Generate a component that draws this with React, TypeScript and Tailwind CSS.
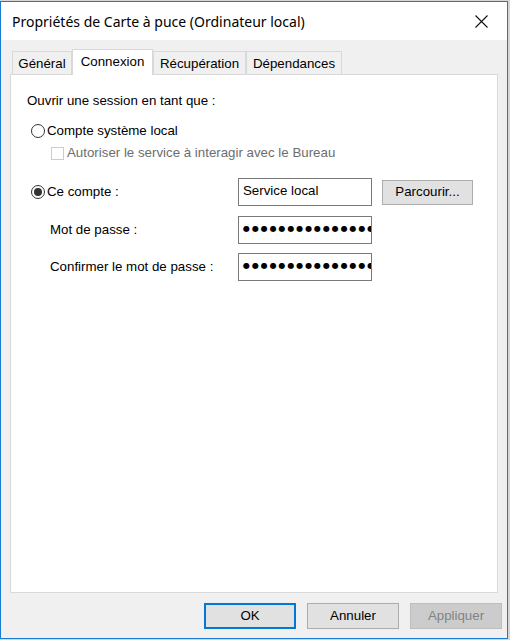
import React from 'react';

const dlg = { fontFamily: '"Liberation Sans", Arial, sans-serif' };

const Radio = ({ checked }: { checked?: boolean }) => (
  <span className="flex h-[14px] w-[14px] shrink-0 items-center justify-center rounded-full border border-[#333333] bg-white">
    {checked && <span className="h-[8px] w-[8px] rounded-full bg-[#333333]" />}
  </span>
);

const Field = ({ children }: { children: React.ReactNode }) => (
  <div className="flex h-[28px] w-[134px] shrink-0 overflow-hidden border border-[#7a7a7a] bg-white pl-[4px] pt-[4px]">
    {children}
  </div>
);

const Dots = () => (
  <span
    className="whitespace-nowrap text-[8px] leading-[15px] tracking-[1.9px] text-black"
    style={{ fontFamily: '"DejaVu Sans", sans-serif' }}
  >
    ●●●●●●●●●●●●●●●
  </span>
);

const Tab = ({ label, w, active }: { label: string; w: string; active?: boolean }) => (
  <div
    className={
      active
        ? `${w} -mb-px z-10 flex h-[26px] items-start justify-center border border-b-0 border-[#d9d9d9] bg-white pt-[4px]`
        : `${w} flex h-[23px] items-start justify-center border border-b-0 border-[#d9d9d9] bg-[#f0f0f0] pt-[4px]`
    }
  >
    {label}
  </div>
);

export default function App() {
  return (
    <div className="h-[640px] w-[510px] bg-[#d6d6d6] pt-[1px]" style={dlg}>
      <div className="flex h-[638px] w-[508px] flex-col border border-[#1a7bd4] bg-[#f0f0f0] text-[13.3px] text-black">
        {/* title bar */}
        <div className="flex h-[38px] shrink-0 items-center justify-between bg-white pl-[11px] pr-[19px]">
          <span
            className="mt-[2px] text-[14px] leading-none text-black"
            style={{ fontFamily: '"Noto Sans", "Open Sans", sans-serif' }}
          >
            Propriétés de Carte à puce (Ordinateur local)
          </span>
          <svg width="13" height="13" viewBox="0 0 13 13" className="mt-[1px]">
            <path d="M0.5 0.5 L12.5 12.5 M12.5 0.5 L0.5 12.5" stroke="#111" strokeWidth="1.1" fill="none" />
          </svg>
        </div>

        {/* tabs */}
        <div className="mt-[9px] flex items-end pl-[11px] leading-[16px]">
          <Tab label="Général" w="w-[60px]" />
          <Tab label="Connexion" w="w-[81px]" active />
          <Tab label="Récupération" w="w-[93px]" />
          <Tab label="Dépendances" w="w-[96px]" />
        </div>

        {/* panel */}
        <div className="ml-[9px] flex h-[519px] w-[488px] flex-col border border-[#d9d9d9] bg-white pl-[16px] leading-[16px]">
          <div className="mt-[18px]">Ouvrir une session en tant que :</div>

          <div className="mt-[14px] flex h-[15px] items-center gap-[2px] pl-[4px]">
            <Radio />
            <span>Compte système local</span>
          </div>

          <div className="mt-[7px] flex h-[16px] items-center gap-[3px] pl-[24px] text-[#6d6d6d]">
            <span className="h-[13px] w-[13px] shrink-0 border border-[#cccccc] bg-white" />
            <span>Autoriser le service à interagir avec le Bureau</span>
          </div>

          <div className="mt-[17px] flex items-center pl-[4px]">
            <div className="flex w-[207px] items-center gap-[2px]">
              <Radio checked />
              <span>Ce compte :</span>
            </div>
            <Field>
              <span className="leading-[16px]">Service local</span>
            </Field>
            <button className="ml-[10px] h-[25px] w-[91px] border border-[#adadad] bg-[#e1e1e1]" style={dlg}>
              Parcourir...
            </button>
          </div>

          <div className="mt-[10px] flex items-center pl-[4px]">
            <div className="w-[207px] pl-[19px]">Mot de passe :</div>
            <Field>
              <Dots />
            </Field>
          </div>

          <div className="mt-[9px] flex items-center pl-[4px]">
            <div className="w-[207px] pl-[19px]">Confirmer le mot de passe :</div>
            <Field>
              <Dots />
            </Field>
          </div>
        </div>

        {/* buttons */}
        <div className="mt-[10px] flex gap-[11px] pl-[203px]">
          <button className="h-[26px] w-[92px] border-2 border-[#0078d7] bg-[#e1e1e1]" style={dlg}>
            OK
          </button>
          <button className="h-[26px] w-[92px] border border-[#adadad] bg-[#e1e1e1]" style={dlg}>
            Annuler
          </button>
          <button className="h-[26px] w-[92px] border border-[#bfbfbf] bg-[#cccccc] text-[#838383]" style={dlg}>
            Appliquer
          </button>
        </div>
      </div>
    </div>
  );
}
